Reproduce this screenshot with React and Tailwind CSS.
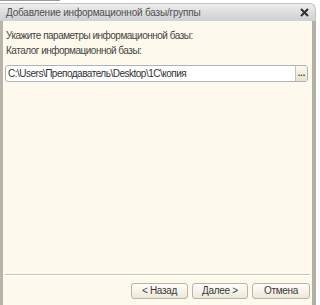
const font = { fontFamily: '"Liberation Sans", Arial, sans-serif' }

const Button = ({ children, className = '' }) => (
    <button
        className={`h-[16px] rounded-[3px] border border-[#b9b5a6] bg-gradient-to-b from-[#fffefb] to-[#ece8d8] text-[10px] leading-none text-[#3a3a3a] tracking-[-0.3px] ${className}`}
    >
        {children}
    </button>
)

const App = () => {
    return (
        <div className="w-[320px] h-[305px] overflow-hidden bg-white flex flex-col" style={font}>
            <div className="h-[3px] shrink-0 flex">
                <div className="w-[60px] h-[1px] bg-[#9a9a9a]" />
            </div>

            <div className="flex-1 flex flex-col mr-[4px] min-h-0">
                <div className="h-[18px] shrink-0 flex items-center justify-between pl-[6px] pr-[6px] rounded-tr-[6px] bg-gradient-to-b from-[#eeeeee] via-[#dddddd] to-[#d0d0d0] border-t border-r border-[#c4c4c4]">
                    <span className="text-[10px] text-[#505050] tracking-[-0.2px]">
                        Добавление информационной базы/группы
                    </span>
                    <svg width="9" height="9" viewBox="0 0 9 9">
                        <path d="M1 1 L8 8 M8 1 L1 8" stroke="#2e2e2e" strokeWidth="2" />
                    </svg>
                </div>

                <div className="flex-1 flex flex-col bg-[#fdf9ec] border-l-[3px] border-r-[4px] border-l-[#b7b4aa] border-r-[#b3afa4] min-h-0">
                    <div className="pt-[7px] pl-[3px] text-[10px] leading-[15px] text-[#454545] tracking-[-0.5px]">
                        <div>Укажите параметры информационной базы:</div>
                        <div>Каталог информационной базы:</div>
                    </div>

                    <div className="mt-[7px] ml-[2px] mr-[4px] h-[17px] flex rounded-[3px] border border-[#aeb3b8] bg-white overflow-hidden">
                        <div className="flex-1 flex items-center pl-[2px] text-[10px] text-[#333333] tracking-[-0.5px]">
                            C:\Users\Преподаватель\Desktop\1C\копия
                        </div>
                        <div className="w-[12px] border-l border-[#c8c4b4] bg-gradient-to-b from-[#fbf8ee] to-[#e8e3cf] flex items-end justify-center pb-[3px]">
                            <span className="text-[9px] leading-none text-[#333] font-bold">...</span>
                        </div>
                    </div>

                    <div className="flex-1" />

                    <div className="mx-[2px] h-[2px] border-t border-[#c9c6b8] border-b border-b-[#ffffff]" />

                    <div className="flex justify-end gap-[4px] pt-[7px] pr-[2px] pb-[6px]">
                        <Button className="w-[57px]">&lt; Назад</Button>
                        <Button className="w-[56px]">Далее &gt;</Button>
                        <Button className="w-[58px]">Отмена</Button>
                    </div>
                </div>
            </div>
        </div>
    )
}

export default App
